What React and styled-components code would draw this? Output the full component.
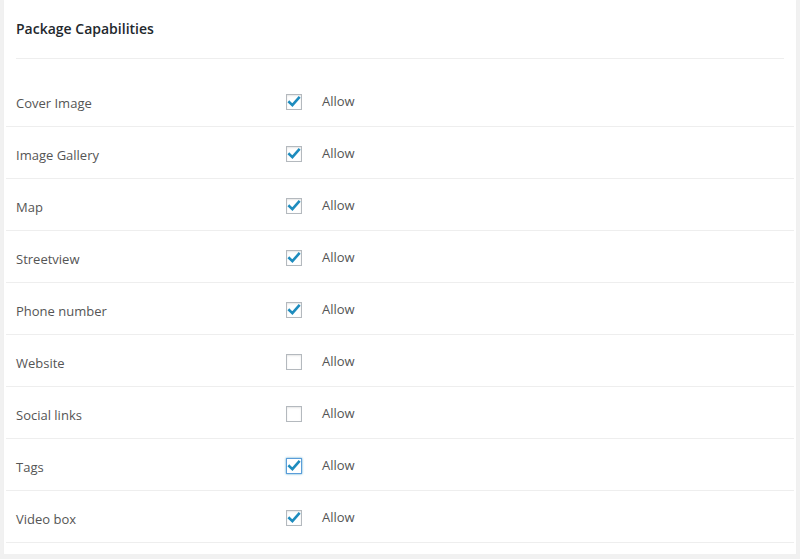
import React from "react";
import styled, { createGlobalStyle } from "styled-components";

const GlobalStyle = createGlobalStyle`
  html, body {
    margin: 0;
    padding: 0;
    background: #f1f1f1;
    font-family: "Open Sans", "Noto Sans", sans-serif;
    color: #444;
  }
`;

const capabilities = [
  { name: "Cover Image", checked: true },
  { name: "Image Gallery", checked: true },
  { name: "Map", checked: true },
  { name: "Streetview", checked: true },
  { name: "Phone number", checked: true },
  { name: "Website", checked: false },
  { name: "Social links", checked: false },
  { name: "Tags", checked: true, focused: true },
  { name: "Video box", checked: true },
];

export default function App() {
  return (
    <>
      <GlobalStyle />
      <Panel>
        <Header>
          <Title>Package Capabilities</Title>
        </Header>
        <Rows>
          {capabilities.map((cap) => (
            <Row key={cap.name}>
              <Label>{cap.name}</Label>
              <Field>
                <Box $focused={cap.focused}>
                  {cap.checked && (
                    <svg width="14" height="14" viewBox="0 0 14 14">
                      <path
                        d="M2.3 7.2 L5.4 10.2 L11.8 2.9"
                        fill="none"
                        stroke="#1e8cbe"
                        strokeWidth="2.6"
                        strokeLinecap="square"
                      />
                    </svg>
                  )}
                </Box>
                <Allow>Allow</Allow>
              </Field>
            </Row>
          ))}
        </Rows>
      </Panel>
    </>
  );
}

const Panel = styled.div`
  margin: 0 4px;
  background: #fff;
  padding-bottom: 11px;
  box-shadow: 0 1px 1px rgba(0, 0, 0, 0.04);
`;

const Header = styled.div`
  margin: 0 12px;
  height: 58px;
  display: flex;
  align-items: center;
  border-bottom: 1px solid #eee;
`;

const Title = styled.h3`
  margin: 0;
  padding-bottom: 1px;
  font-size: 14px;
  font-weight: 600;
  color: #23282d;
`;

const Rows = styled.div`
  margin: 16px 2px 0 2px;
`;

const Row = styled.div`
  display: grid;
  grid-template-columns: 270px 1fr;
  align-items: center;
  height: 51px;
  padding-left: 10px;
  border-bottom: 1px solid #eee;
`;

const Label = styled.div`
  font-size: 13px;
  color: #555;
  padding-top: 5px;
`;

const Field = styled.div`
  display: flex;
  align-items: center;
  gap: 20px;
  padding-top: 2px;
`;

const Box = styled.span`
  box-sizing: border-box;
  width: 16px;
  height: 16px;
  display: flex;
  align-items: center;
  justify-content: center;
  background: #fff;
  border: 1px solid ${(p) => (p.$focused ? "#5b9dd9" : "#b4b9be")};
  box-shadow: ${(p) =>
    p.$focused
      ? "0 0 2px rgba(30, 140, 190, 0.8)"
      : "inset 0 1px 2px rgba(0, 0, 0, 0.1)"};
`;

const Allow = styled.span`
  font-size: 13px;
  color: #555;
  padding-bottom: 1px;
`;
